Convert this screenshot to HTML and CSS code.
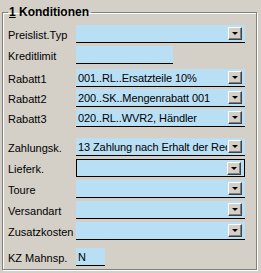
FILE: index.html
```html
<!DOCTYPE html>
<html lang="de">
<head>
    <meta charset="UTF-8">
    <title>Konditionen</title>
    <link rel="stylesheet" href="styles.css">
</head>
<body>
    <fieldset class="group">
        <legend><u>1</u> Konditionen</legend>

        <div class="row first">
            <label>Preislist.Typ</label>
            <div class="field combo"><span></span><i class="btn"></i></div>
        </div>
        <div class="row">
            <label>Kreditlimit</label>
            <div class="field short"><span></span></div>
        </div>

        <!-- Rabatte -->
        <div class="row sep-small tight">
            <label>Rabatt1</label>
            <div class="field combo"><span>001..RL..Ersatzteile 10%</span><i class="btn"></i></div>
        </div>
        <div class="row tight">
            <label>Rabatt2</label>
            <div class="field combo"><span>200..SK..Mengenrabatt 001</span><i class="btn"></i></div>
        </div>
        <div class="row tight">
            <label>Rabatt3</label>
            <div class="field combo"><span>020..RL..WVR2, Händler</span><i class="btn"></i></div>
        </div>

        <!-- Zahlung / Lieferung -->
        <div class="row sep-big">
            <label>Zahlungsk.</label>
            <div class="field combo"><span>13 Zahlung nach Erhalt der Rechnung</span><i class="btn"></i></div>
        </div>
        <div class="row">
            <label>Lieferk.</label>
            <div class="field combo focus"><span></span><i class="btn"></i></div>
        </div>
        <div class="row">
            <label>Toure</label>
            <div class="field combo"><span></span><i class="btn"></i></div>
        </div>
        <div class="row">
            <label>Versandart</label>
            <div class="field combo"><span></span><i class="btn"></i></div>
        </div>
        <div class="row">
            <label>Zusatzkosten</label>
            <div class="field combo"><span></span><i class="btn"></i></div>
        </div>

        <div class="row sep-last">
            <label>KZ Mahnsp.</label>
            <div class="field tiny"><span>N</span></div>
        </div>
    </fieldset>
</body>
</html>
```

FILE: styles.css
```css
/* General styling */
body {
    margin: 0;
    width: 261px;
    height: 273px;
    background-color: #d4d0c8;
    font-family: "Liberation Sans", Arial, sans-serif;
    font-size: 11px;
    color: #000;
    overflow: hidden;
}

/* Group box */
.group {
    margin: 6px 0 0 2px;
    width: 255px;
    height: 264px;
    box-sizing: border-box;
    padding: 0 0 0 5px;
    border: 1px solid #808080;
    box-shadow: inset 1px 1px 0 #fff, 1px 1px 0 #fff;
}

.group legend {
    font-weight: bold;
    font-size: 12px;
    padding: 0 2px 0 1px;
    margin-left: 0;
    line-height: 12px;
}

/* Rows */
.row {
    display: flex;
    align-items: stretch;
    height: 18px;
    margin-top: 3px;
}
.row.first {
    margin-top: 7px;
}
.row.tight {
    margin-top: 2px;
}
.row.sep-small {
    margin-top: 5px;
}
.row.sep-big {
    margin-top: 11px;
}
.row.sep-last {
    margin-top: 8px;
}

.row label {
    width: 68px;
    flex: none;
    display: flex;
    align-items: flex-end;
    padding-bottom: 2px;
    box-sizing: border-box;
}

/* Fields */
.field {
    width: 169px;
    box-sizing: border-box;
    background-color: #b9dff5;
    border-bottom: 1px solid #000;
    display: flex;
    align-items: center;
    letter-spacing: -0.1px;
}
.field span {
    flex: 1;
    padding-left: 2px;
    white-space: nowrap;
    overflow: hidden;
}
.field.combo span {
    margin-right: 1px;
}
.field.short {
    width: 97px;
}
.field.tiny {
    width: 29px;
}
.field.focus {
    border: 1px solid #000;
}

/* Dropdown button */
.btn {
    flex: none;
    width: 14px;
    height: 13px;
    margin-right: 3px;
    box-sizing: border-box;
    background-color: #d4d0c8;
    border-top: 1px solid #fff;
    border-left: 1px solid #fff;
    border-right: 1px solid #404040;
    border-bottom: 1px solid #404040;
    box-shadow: inset -1px -1px 0 #808080;
    position: relative;
}
.btn::after {
    content: "";
    position: absolute;
    left: 3px;
    top: 4px;
    border-left: 3px solid transparent;
    border-right: 3px solid transparent;
    border-top: 3px solid #000;
}
```
